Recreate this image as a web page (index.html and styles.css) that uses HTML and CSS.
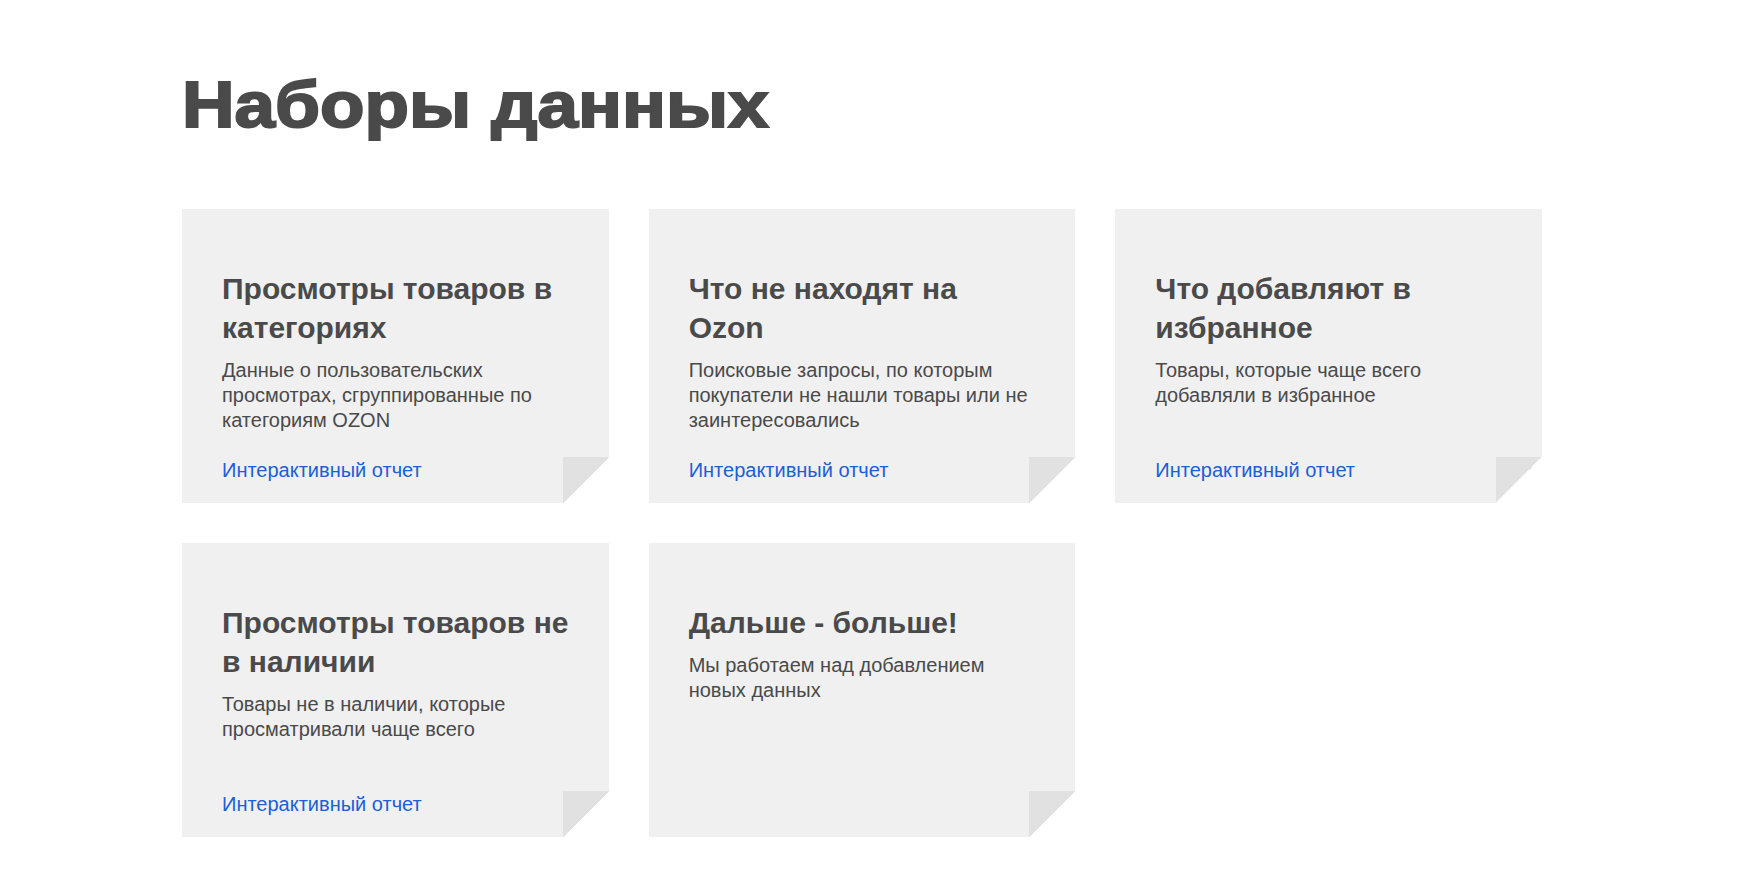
FILE: index.html
```html
<!DOCTYPE html>
<html>
  <head>
    <meta charset="UTF-8">
    <title>Наборы данных</title>
    <link rel="stylesheet" href="styles.css">
  </head>
  <body>
    <div class="page">
      <h1 class="page-title">Наборы данных</h1>
      <div class="datasets">
        <div class="dataset">
          <h2>Просмотры товаров в категориях</h2>
          <p>Данные о пользовательских просмотрах, сгруппированные по категориям OZON</p>
          <a href="#">Интерактивный отчет</a>
        </div>
        <div class="dataset">
          <h2>Что не находят на Ozon</h2>
          <p>Поисковые запросы, по которым покупатели не нашли товары или не заинтересовались</p>
          <a href="#">Интерактивный отчет</a>
        </div>
        <div class="dataset">
          <h2>Что добавляют в избранное</h2>
          <p>Товары, которые чаще всего добавляли в избранное</p>
          <a href="#">Интерактивный отчет</a>
        </div>
        <div class="dataset">
          <h2>Просмотры товаров не в наличии</h2>
          <p>Товары не в наличии, которые просматривали чаще всего</p>
          <a href="#">Интерактивный отчет</a>
        </div>
        <div class="dataset">
          <h2>Дальше - больше!</h2>
          <p>Мы работаем над добавлением новых данных</p>
        </div>
      </div>
    </div>
  </body>
</html>
```
FILE: styles.css
```css
html {
  font-family: "Liberation Sans", Arial, sans-serif;
  background: #fff;
  color: #4a4a4a;
}
body {
  margin: 0;
}
.page {
  width: 1360px;
  padding: 0 0 40px 182px;
}
.page-title {
  margin: 0;
  padding-top: 65px;
  font-size: 65px;
  line-height: 80px;
  font-weight: bold;
  -webkit-text-stroke: 2px #4a4a4a;
  transform: scaleX(1.12);
  transform-origin: left;
}
.datasets {
  display: grid;
  grid-template-columns: repeat(3, 1fr);
  gap: 40px;
  margin-top: 64px;
}
.dataset {
  position: relative;
  display: flex;
  flex-direction: column;
  min-height: 294px;
  box-sizing: border-box;
  padding: 60px 38px 20px 40px;
  background: #f0f0f0;
}
/* folded corner */
.dataset::after {
  content: "";
  position: absolute;
  right: 0;
  bottom: 0;
  width: 46px;
  height: 46px;
  background: linear-gradient(to bottom right, #e1e1e1 50%, #fff 50%);
}
.dataset h2 {
  margin: 0;
  font-size: 30px;
  line-height: 39px;
  font-weight: bold;
}
.dataset p {
  margin: 11px 0 25px;
  font-size: 20px;
  line-height: 25px;
}
.dataset a {
  margin-top: auto;
  font-size: 20px;
  line-height: 25px;
  color: #1a5fd8;
  text-decoration: none;
  align-self: flex-start;
}
```
